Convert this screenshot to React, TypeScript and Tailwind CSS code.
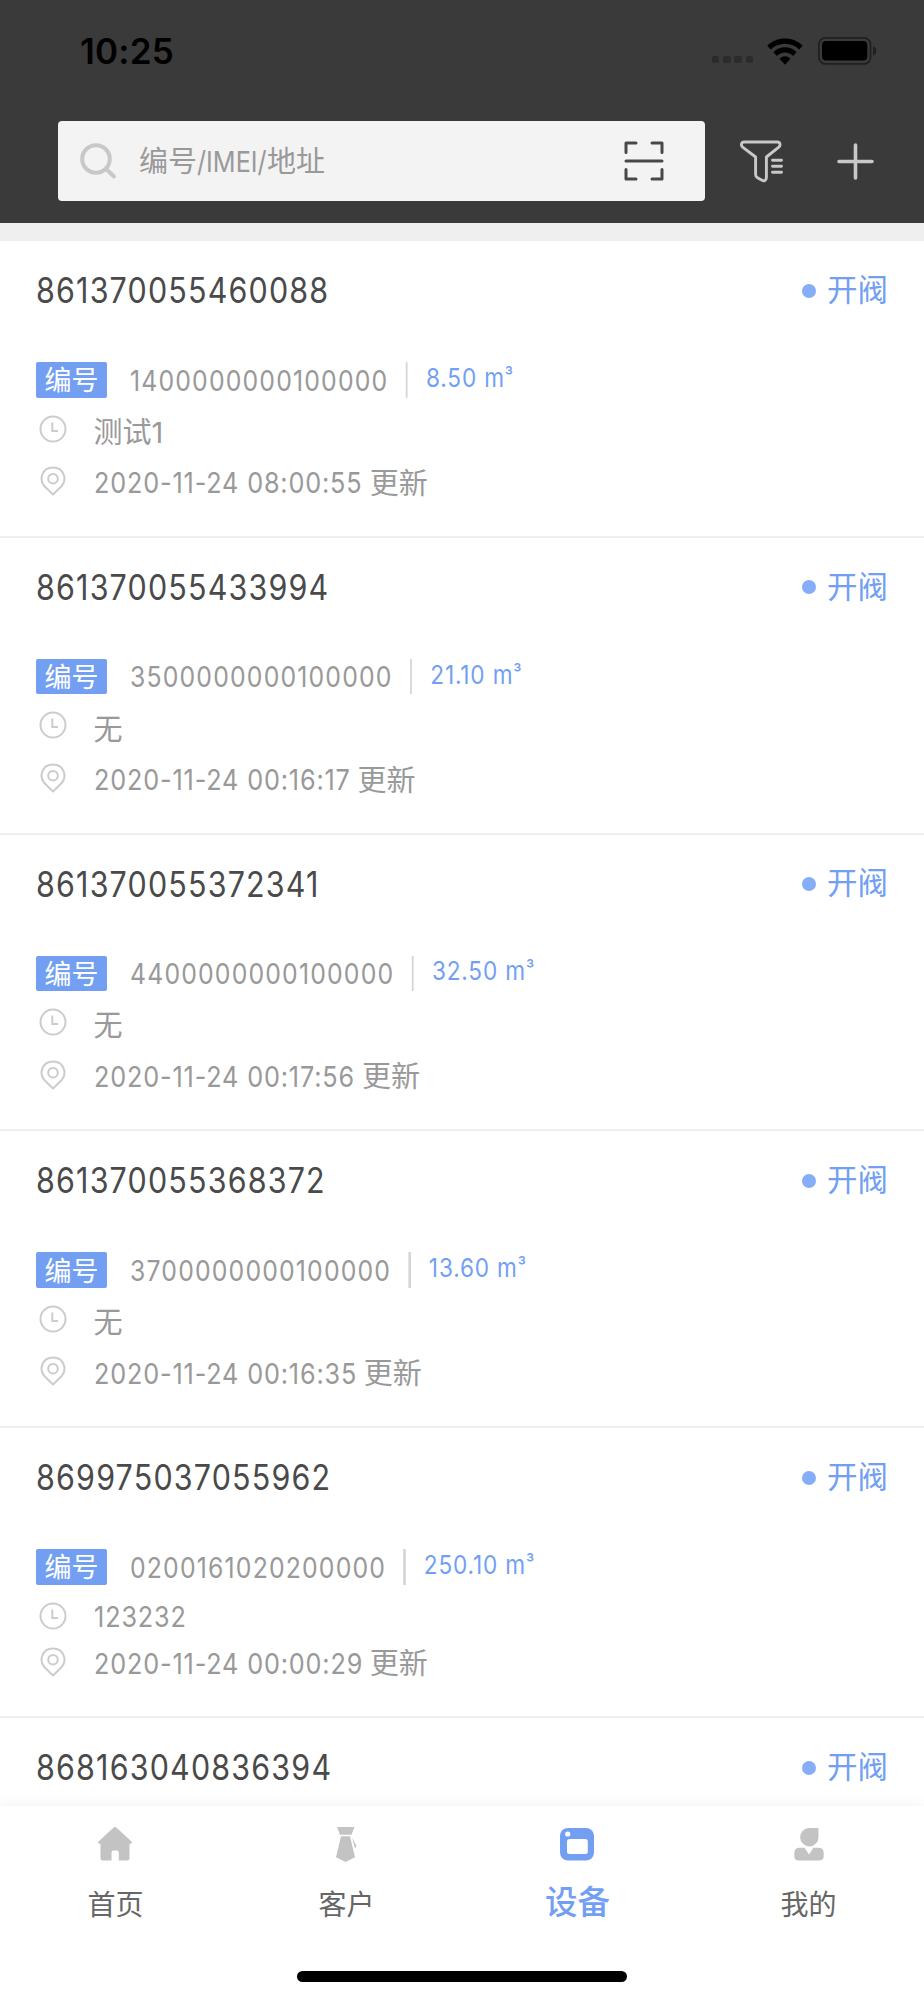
import { useState } from 'react'
import type { ReactNode } from 'react'

interface Reading {
  code: string
  volume: string
  note: string
  updatedAt: string
}

interface Device {
  imei: string
  reading?: Reading
}

const DEVICES: Device[] = [
  { imei: '861370055460088', reading: { code: '1400000000100000', volume: '8.50', note: '测试1', updatedAt: '2020-11-24 08:00:55' } },
  { imei: '861370055433994', reading: { code: '3500000000100000', volume: '21.10', note: '无', updatedAt: '2020-11-24 00:16:17' } },
  { imei: '861370055372341', reading: { code: '4400000000100000', volume: '32.50', note: '无', updatedAt: '2020-11-24 00:17:56' } },
  { imei: '861370055368372', reading: { code: '3700000000100000', volume: '13.60', note: '无', updatedAt: '2020-11-24 00:16:35' } },
  { imei: '869975037055962', reading: { code: '0200161020200000', volume: '250.10', note: '123232', updatedAt: '2020-11-24 00:00:29' } },
  { imei: '868163040836394' },
]

function StatusBar() {
  return (
    <div className="flex h-[102px] items-center justify-between pl-[80px] pr-[47px] text-black">
      <span className="text-[35px] font-semibold leading-none tracking-[0.2px]">10:25</span>
      <div className="flex items-center">
        <div className="mr-[14px] mt-[17px] flex gap-[3.700px]">
          {[0, 1, 2, 3].map(i => (
            <span key={i} className="size-[7.500px] rounded-[2px] bg-[#2b2b2b]" />
          ))}
        </div>
        <svg className="mr-[15px] h-[27px] w-[36px]" viewBox="0 0 36 27">
          <path d="M18 0.5C25 0.5 31.3 3.2 35.7 7.7L32.2 11.5C28.6 7.9 23.6 5.8 18 5.8S7.4 7.9 3.8 11.5L0.3 7.7C4.7 3.2 11 0.5 18 0.5Z" />
          <path d="M18 9.3C22.6 9.3 26.7 11.1 29.6 14.2L26 18C24 15.9 21.2 14.6 18 14.6S12 15.9 10 18L6.4 14.2C9.3 11.1 13.4 9.3 18 9.3Z" />
          <path d="M18 18.3C20.2 18.3 22.1 19.2 23.4 20.8L18 26.7L12.6 20.8C13.9 19.2 15.8 18.3 18 18.3Z" />
        </svg>
        <svg className="h-[28px] w-[59px]" viewBox="0 0 59 28">
          <rect x="0.9" y="0.9" width="51.6" height="26" rx="6.5" fill="none" stroke="#202020" strokeWidth="1.8" />
          <rect x="4" y="4" width="45.3" height="19.5" rx="4" />
          <path d="M55 9.3C57 10 58.2 11.7 58.2 14S57 18 55 18.7Z" fill="#202020" />
        </svg>
      </div>
    </div>
  )
}

function SearchBar() {
  return (
    <div className="flex items-center pl-[58px] pr-[50px] pt-[19px]">
      <div className="flex h-[80px] w-[647px] items-center rounded-[4px] bg-[#f3f3f3] pl-[22px] pr-[41px]">
        <svg className="size-[37px] shrink-0" viewBox="0 0 37 37" fill="none" stroke="#c8c8c8" strokeWidth="4">
          <circle cx="16" cy="16" r="13.8" />
          <path d="M26 26L34 33.5" strokeLinecap="round" />
        </svg>
        <div className="ml-[22px] flex flex-1 items-center text-[29px] leading-none text-[#999]">
          <span>编号</span>
          <span className="w-[70px]"><span className="inline-block origin-left scale-x-[0.87]">/IMEI/</span></span>
          <span>地址</span>
        </div>
        <svg className="size-[40px]" viewBox="0 0 40 40" fill="none" stroke="#484848" strokeWidth="3" strokeLinecap="round" strokeLinejoin="round">
          <path d="M2 11.5V2H12M28 2H38V11.5M2 28.5V38H12M28 38H38V28.5M2 20H38" />
        </svg>
      </div>
      <svg className="ml-[35px] h-[43px] w-[45px]" viewBox="0 0 45 43" fill="none" stroke="#c8c8c8" strokeWidth="2.9" strokeLinecap="round" strokeLinejoin="round">
        <path d="M4 2H37.5C40.3 2 40.8 5.4 38.8 7.2L26.4 17V37.5C26.4 40.5 24 41.4 22 40.3L17.5 37.8C16 37 15.6 36 15.6 34.5V17L2.6 7.2C0.7 5.4 1.2 2 4 2Z" />
        <path d="M32.5 20.3H41.5M32.5 26.3H41.5M32.5 32.2H41.5" />
      </svg>
      <svg className="ml-[52px] size-[37px]" viewBox="0 0 37 37" stroke="#c8c8c8" strokeWidth="3.6" strokeLinecap="round">
        <path d="M18.500 2V35M2 18.500H35" />
      </svg>
    </div>
  )
}

function ClockIcon() {
  return (
    <svg className="ml-[3px] mt-[9px] size-[28px]" viewBox="0 0 28 28" fill="none" stroke="#ccc" strokeWidth="2">
      <circle cx="14" cy="14" r="12.5" />
      <path d="M13.3 7.5V16H19" />
    </svg>
  )
}

function PinIcon() {
  return (
    <svg className="ml-[3px] mt-[9px] h-[30px] w-[28px]" viewBox="0 0 28 30" fill="none" stroke="#ccc" strokeWidth="2" strokeLinejoin="round">
      <path d="M14 28.5L5.3 20C-0.3 13.5 3 1.5 14 1.5S28.3 13.5 22.7 20Z" />
      <circle cx="14" cy="12.7" r="4.8" />
    </svg>
  )
}

function ReadingInfo({ reading }: { reading: Reading }) {
  const compact = /^\d+$/.test(reading.note)
  return (
    <>
      <div className="mt-[23px] flex h-[35.500px]">
        <span className="flex w-[71px] items-center justify-center rounded-[2px] bg-[#739ff3] pt-[2px] text-[27px] leading-none text-white">编号</span>
        <div className="ml-[22.500px] flex origin-left scale-x-[0.87] items-center">
          <span className="pt-[2px] text-[28.500px] leading-none tracking-[1.350px] text-[#999]">{reading.code}</span>
          <span className="ml-[20px] h-full w-[2.300px] bg-[#d5d5d5]" />
          <span className="mb-[4px] ml-[21px] text-[26px] leading-none tracking-[0.950px] text-[#739ff3]">
            {reading.volume} m<span className="align-[3px] text-[21px] leading-[0]">³</span>
          </span>
        </div>
      </div>

      <div className="mt-[8px] text-[29px] leading-none text-[#999]">
        <div className={compact ? 'flex h-[45px]' : 'flex h-[51.500px]'}>
          <ClockIcon />
          {compact ? (
            <span className="ml-[26.500px] origin-left scale-x-[0.87] self-center pt-[2px] tracking-[1px]">{reading.note}</span>
          ) : (
            <span className="ml-[26.500px] self-center pt-[2px]">{reading.note}</span>
          )}
        </div>
        <div className="flex h-[51.500px]">
          <PinIcon />
          <div className="ml-[26.500px] flex origin-left scale-x-[0.87] items-center self-center">
            <span className="tracking-[0.970px]">{reading.updatedAt}</span>
            <span className="ml-[8px] origin-left scale-x-[1.15] pt-[1px]">更新</span>
          </div>
        </div>
      </div>
    </>
  )
}

function DeviceItem({ device }: { device: Device }) {
  return (
    <div className="border-b-2 border-[#efefef] px-[36px] pb-[27.250px]">
      <div className="flex h-[98px] items-center justify-between pt-[1px]">
        <span className="origin-left scale-x-[0.87] text-[35px] leading-none tracking-[1.350px] text-[#4a4a4a]">{device.imei}</span>
        <div className="flex items-center text-[#739ff3]">
          <span className="mr-[11px] size-[14px] rounded-full bg-[#86aef8]" />
          <span className="pb-[1px] text-[30.500px] leading-none">开阀</span>
        </div>
      </div>
      {device.reading && <ReadingInfo reading={device.reading} />}
    </div>
  )
}

const TABS: { name: string; icon: ReactNode }[] = [
  {
    name: '首页',
    icon: (
      <svg className="mr-[1px] size-[36px]" viewBox="0 0 36 36" fill="currentColor">
        <path d="M16.7 1.6Q18 0.5 19.3 1.6L34.5 15.5Q35.5 17.4 33.5 17.7H32.5V32Q32.5 34.5 30 34.5H21.8V26.5Q21.8 24.5 19.8 24.5H16.5Q14.5 24.5 14.5 26.5V34.5H6Q3.5 34.5 3.5 32V17.7H2.5Q0.5 17.4 1.5 15.5Z" />
      </svg>
    ),
  },
  {
    name: '客户',
    icon: (
      <svg className="mr-[1px] size-[36px]" viewBox="0 0 36 36" fill="currentColor">
        <path d="M9 1H26.5L23.5 8.8H12ZM13 10.3H22L27 31.3L17.5 36L8 31.3ZM24 11.5L28.5 20L27 22.5Z" />
      </svg>
    ),
  },
  {
    name: '设备',
    icon: (
      <svg className="mr-[1px] size-[36px]" viewBox="0 0 36 36">
        <rect x="1" y="2" width="34" height="32.5" rx="8" fill="currentColor" />
        <circle cx="8.7" cy="8" r="2.6" fill="white" />
        <rect x="8" y="13" width="20.8" height="15" rx="2.5" fill="white" />
      </svg>
    ),
  },
  {
    name: '我的',
    icon: (
      <svg className="size-[36px]" viewBox="0 0 36 36" fill="currentColor">
        <path d="M18 2H27.5V11A9.2 9.2 0 1 1 18 2ZM8.5 21.7H13.5L18 28.5L22.5 21.7H27.5Q32.7 21.7 32.7 27V30Q32.7 34.5 28 34.5H8Q3.3 34.5 3.3 30V27Q3.3 21.7 8.5 21.7Z" />
      </svg>
    ),
  },
]

export default function App() {
  const [active, setActive] = useState('设备')

  return (
    <div className="flex h-[2000px] w-[924px] flex-col overflow-hidden bg-white font-['Inter','Noto_Sans_CJK_SC',sans-serif]">
      <header className="h-[223px] shrink-0 bg-[#3a3a3a]">
        <StatusBar />
        <SearchBar />
      </header>

      <main className="min-h-0 flex-1 overflow-hidden border-t-[18px] border-[#efefef]">
        {DEVICES.map(d => <DeviceItem key={d.imei} device={d} />)}
      </main>

      {/* Tab bar */}
      <nav className="relative flex h-[194px] shrink-0 flex-col items-center bg-white shadow-[0_-2px_12px_rgba(0,0,0,0.05)]">
        <div className="flex w-full">
          {TABS.map(t => (
            <button
              key={t.name}
              onClick={() => setActive(t.name)}
              className={t.name === active
                ? 'flex h-[165px] flex-1 flex-col items-center pt-[20px] text-[#739ff3]'
                : 'flex h-[165px] flex-1 flex-col items-center pt-[20px] text-[#c3c3c3]'}
            >
              {t.icon}
              <span className={t.name === active
                ? 'mt-[24px] text-[32.500px] font-medium leading-[34px]'
                : 'mt-[26px] text-[28px] leading-[34px] text-[#666]'}
              >
                {t.name}
              </span>
            </button>
          ))}
        </div>
        <div className="h-[11px] w-[330px] rounded-full bg-black" />
      </nav>
    </div>
  )
}
